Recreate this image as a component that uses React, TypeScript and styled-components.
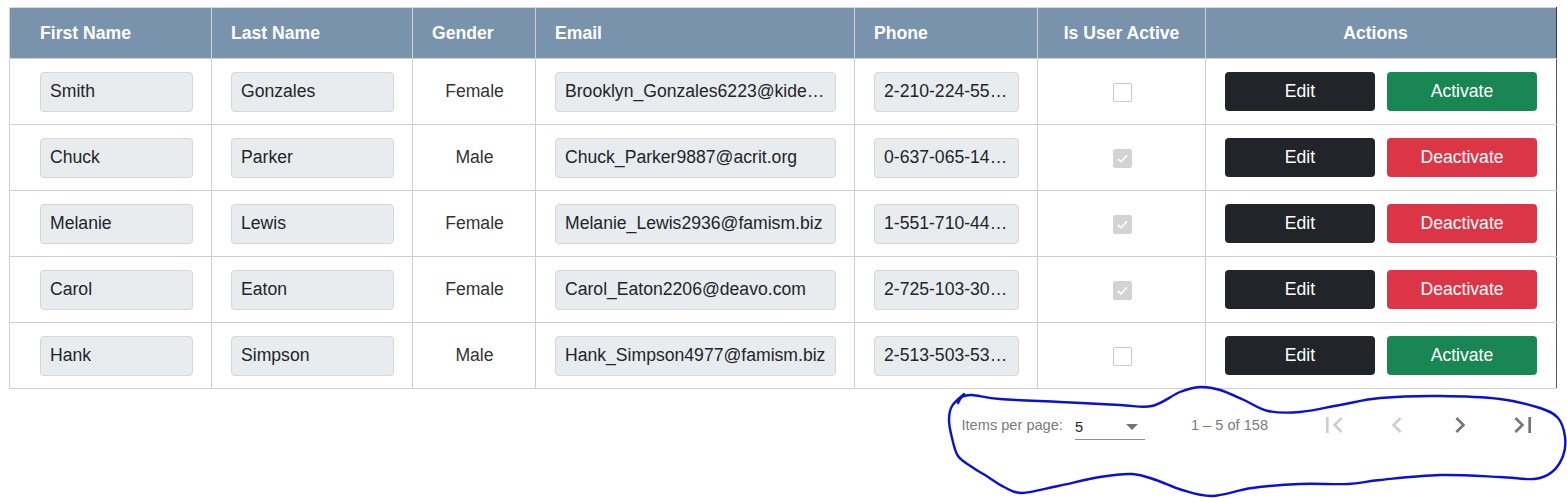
import React from "react";
import styled, { createGlobalStyle } from "styled-components";

const GlobalStyle = createGlobalStyle`
  html, body { margin: 0; padding: 0; background: #ffffff; }
  body { font-family: "Liberation Sans", Arial, sans-serif; }
`;

type User = {
  first: string;
  last: string;
  gender: string;
  email: string;
  phone: string;
  active: boolean;
};

const users: User[] = [
  { first: "Smith", last: "Gonzales", gender: "Female", email: "Brooklyn_Gonzales6223@kideo.com", phone: "2-210-224-5578 x412", active: false },
  { first: "Chuck", last: "Parker", gender: "Male", email: "Chuck_Parker9887@acrit.org", phone: "0-637-065-1438 x221", active: true },
  { first: "Melanie", last: "Lewis", gender: "Female", email: "Melanie_Lewis2936@famism.biz", phone: "1-551-710-4482 x730", active: true },
  { first: "Carol", last: "Eaton", gender: "Female", email: "Carol_Eaton2206@deavo.com", phone: "2-725-103-3054 x118", active: true },
  { first: "Hank", last: "Simpson", gender: "Male", email: "Hank_Simpson4977@famism.biz", phone: "2-513-503-5367 x905", active: false },
];

const Page = styled.div`
  position: relative;
  width: 1567px;
  height: 498px;
  padding: 7px 0 0 9px;
  box-sizing: border-box;
  overflow: hidden;
`;

const TableWrap = styled.div`
  width: 1547px;
`;

const Table = styled.table`
  width: 1547px;
  border-collapse: collapse;
  table-layout: fixed;
  font-size: 17.6px;
  color: #212529;
`;

const HeadCell = styled.th<{ $center?: boolean; $first?: boolean; $last?: boolean }>`
  height: 50px;
  padding: 0 ${(p) => (p.$center ? "0" : "19px")} 0 ${(p) => (p.$center ? "0" : p.$first ? "30px" : "19px")};
  background: #7a93ac;
  color: #ffffff;
  font-weight: 700;
  font-size: 17.6px;
  text-align: ${(p) => (p.$center ? "center" : "left")};
  border: 1px solid #cfcfcf;
  border-top-color: #d9d9d9;
  ${(p) => (p.$last ? "border-right: 1px solid #3a3a3a; padding-right: 11px;" : "")}
  white-space: nowrap;
`;

const Cell = styled.td<{ $center?: boolean; $first?: boolean; $last?: boolean }>`
  height: 65px;
  padding: 0 18px 0 ${(p) => (p.$first ? "30px" : "19px")};
  border: 1px solid #cfcfcf;
  ${(p) => (p.$last ? "border-right: 1px solid #5a5a5a;" : "")}
  text-align: ${(p) => (p.$center ? "center" : "left")};
  vertical-align: middle;
  color: #333333;
`;

const TextInput = styled.input`
  display: block;
  width: 100%;
  height: 40px;
  box-sizing: border-box;
  padding: 0 9px;
  background: #e9ecef;
  border: 1px solid #d3d7db;
  border-radius: 4px;
  font-family: "Liberation Sans", Arial, sans-serif;
  font-size: 17.6px;
  color: #212529;
  text-overflow: ellipsis;
  white-space: nowrap;
  overflow: hidden;
  outline: none;
`;

const CheckBox = styled.span<{ $checked: boolean }>`
  display: inline-flex;
  align-items: center;
  justify-content: center;
  width: 19px;
  height: 19px;
  box-sizing: border-box;
  border-radius: 2px;
  border: 1px solid ${(p) => (p.$checked ? "#d3d3d3" : "#c9c9c9")};
  background: ${(p) => (p.$checked ? "#d3d3d3" : "#ffffff")};
  vertical-align: middle;
`;

const Actions = styled.div`
  display: flex;
  gap: 12px;
`;

const Button = styled.button<{ $variant: "dark" | "success" | "danger" }>`
  width: 150px;
  height: 39px;
  border: none;
  border-radius: 4px;
  color: #ffffff;
  font-family: "Liberation Sans", Arial, sans-serif;
  font-size: 17.6px;
  background: ${(p) =>
    p.$variant === "dark" ? "#212529" : p.$variant === "success" ? "#198754" : "#dc3545"};
  cursor: pointer;
`;

const Paginator = styled.div`
  display: flex;
  align-items: center;
  justify-content: flex-end;
  width: 1547px;
  height: 72px;
  box-sizing: border-box;
  padding-right: 2px;
  font-family: "Liberation Sans", Arial, sans-serif;
  font-size: 14.6px;
  color: #7a7a7a;
`;

const PageSizeLabel = styled.span`
  margin-right: 12px;
`;

const Select = styled.div`
  display: flex;
  align-items: center;
  justify-content: space-between;
  width: 70px;
  height: 26px;
  box-sizing: border-box;
  padding: 0 7px 0 0;
  border-bottom: 1px solid #8f8f8f;
  color: #222222;
  margin-top: 4px;
`;

const Arrow = styled.span`
  width: 0;
  height: 0;
  border-left: 6px solid transparent;
  border-right: 6px solid transparent;
  border-top: 6px solid #757575;
`;

const RangeLabel = styled.span`
  margin: 0 34px 0 46px;
`;

const IconButton = styled.button<{ $disabled?: boolean }>`
  display: flex;
  align-items: center;
  justify-content: center;
  width: 63px;
  height: 48px;
  padding: 0;
  border: none;
  background: transparent;
  color: ${(p) => (p.$disabled ? "#cfcfcf" : "#757575")};
`;

const Annotation = styled.svg`
  position: absolute;
  left: 0;
  top: 0;
  pointer-events: none;
`;

const Icon = ({ d }: { d: string }) => (
  <svg width="32" height="32" viewBox="0 0 24 24" fill="currentColor">
    <path d={d} />
  </svg>
);

const ICONS = {
  first: "M18.41 16.59L13.82 12l4.59-4.59L17 6l-6 6 6 6zM6 6h2v12H6z",
  prev: "M15.41 7.41L14 6l-6 6 6 6 1.41-1.41L10.83 12z",
  next: "M10 6L8.59 7.41 13.17 12l-4.58 4.59L10 18l6-6z",
  last: "M5.59 7.41L10.18 12l-4.59 4.59L7 18l6-6-6-6zM16 6h2v12h-2z",
};

const loopPoints: [number, number][] = [
  [964, 394], [952, 406], [949, 420], [952, 438], [958, 456], [972, 467], [988, 477],
  [1004, 487], [1022, 493], [1058, 486], [1100, 477], [1132, 474], [1156, 480],
  [1182, 490], [1212, 496], [1252, 488], [1300, 484], [1348, 484], [1380, 480],
  [1440, 475], [1500, 477], [1534, 479], [1552, 472], [1563, 456], [1565, 437],
  [1558, 418], [1540, 408], [1500, 399], [1440, 396], [1380, 398], [1340, 405],
  [1300, 412], [1268, 411], [1244, 400], [1220, 390], [1200, 387], [1180, 392],
  [1152, 406], [1120, 405], [1060, 402], [1000, 399], [972, 395], [962, 397], [958, 403],
];

function smoothPath(pts: [number, number][]): string {
  let d = `M${pts[0][0]} ${pts[0][1]}`;
  for (let i = 0; i < pts.length - 1; i++) {
    const p0 = pts[i - 1] || pts[i];
    const p1 = pts[i];
    const p2 = pts[i + 1];
    const p3 = pts[i + 2] || p2;
    const c1x = p1[0] + (p2[0] - p0[0]) / 6;
    const c1y = p1[1] + (p2[1] - p0[1]) / 6;
    const c2x = p2[0] - (p3[0] - p1[0]) / 6;
    const c2y = p2[1] - (p3[1] - p1[1]) / 6;
    d += ` C${c1x.toFixed(1)} ${c1y.toFixed(1)} ${c2x.toFixed(1)} ${c2y.toFixed(1)} ${p2[0]} ${p2[1]}`;
  }
  return d;
}

export default function App() {
  return (
    <>
      <GlobalStyle />
      <Page>
        <TableWrap>
          <Table>
            <colgroup>
              <col style={{ width: 202 }} />
              <col style={{ width: 201 }} />
              <col style={{ width: 123 }} />
              <col style={{ width: 319 }} />
              <col style={{ width: 183 }} />
              <col style={{ width: 168 }} />
              <col style={{ width: 351 }} />
            </colgroup>
            <thead>
              <tr>
                <HeadCell $first>First Name</HeadCell>
                <HeadCell>Last Name</HeadCell>
                <HeadCell>Gender</HeadCell>
                <HeadCell>Email</HeadCell>
                <HeadCell>Phone</HeadCell>
                <HeadCell $center>Is User Active</HeadCell>
                <HeadCell $center $last>Actions</HeadCell>
              </tr>
            </thead>
            <tbody>
              {users.map((u) => (
                <tr key={u.email}>
                  <Cell $first>
                    <TextInput readOnly value={u.first} />
                  </Cell>
                  <Cell>
                    <TextInput readOnly value={u.last} />
                  </Cell>
                  <Cell $center>{u.gender}</Cell>
                  <Cell>
                    <TextInput readOnly value={u.email} />
                  </Cell>
                  <Cell>
                    <TextInput readOnly value={u.phone} />
                  </Cell>
                  <Cell $center>
                    <CheckBox $checked={u.active}>
                      {u.active && (
                        <svg width="13" height="13" viewBox="0 0 16 16">
                          <path d="M2.5 8.5 L6.2 12 L13.5 4" fill="none" stroke="#ffffff" strokeWidth="2" />
                        </svg>
                      )}
                    </CheckBox>
                  </Cell>
                  <Cell $last>
                    <Actions>
                      <Button $variant="dark">Edit</Button>
                      {u.active ? (
                        <Button $variant="danger">Deactivate</Button>
                      ) : (
                        <Button $variant="success">Activate</Button>
                      )}
                    </Actions>
                  </Cell>
                </tr>
              ))}
            </tbody>
          </Table>
        </TableWrap>
        <Paginator>
          <PageSizeLabel>Items per page:</PageSizeLabel>
          <Select>
            <span>5</span>
            <Arrow />
          </Select>
          <RangeLabel>1 – 5 of 158</RangeLabel>
          <IconButton $disabled aria-label="First page">
            <Icon d={ICONS.first} />
          </IconButton>
          <IconButton $disabled aria-label="Previous page">
            <Icon d={ICONS.prev} />
          </IconButton>
          <IconButton aria-label="Next page">
            <Icon d={ICONS.next} />
          </IconButton>
          <IconButton aria-label="Last page">
            <Icon d={ICONS.last} />
          </IconButton>
        </Paginator>
        <Annotation width="1567" height="498" viewBox="0 0 1567 498">
          <path d={smoothPath(loopPoints)} fill="none" stroke="#0a10d4" strokeWidth="2.4" strokeLinecap="round" strokeLinejoin="round" />
        </Annotation>
      </Page>
    </>
  );
}
